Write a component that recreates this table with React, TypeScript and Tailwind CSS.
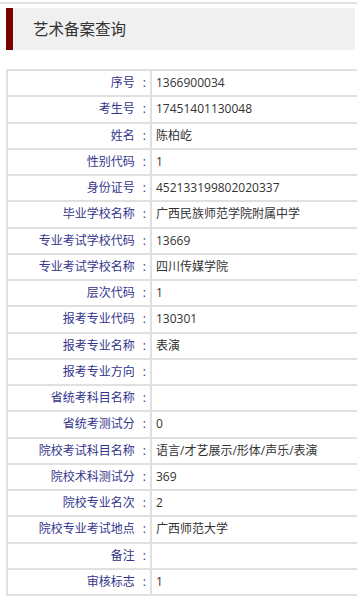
import React from "react";

const rows: [string, string][] = [
  ["序号", "1366900034"],
  ["考生号", "17451401130048"],
  ["姓名", "陈柏屹"],
  ["性别代码", "1"],
  ["身份证号", "452133199802020337"],
  ["毕业学校名称", "广西民族师范学院附属中学"],
  ["专业考试学校代码", "13669"],
  ["专业考试学校名称", "四川传媒学院"],
  ["层次代码", "1"],
  ["报考专业代码", "130301"],
  ["报考专业名称", "表演"],
  ["报考专业方向", ""],
  ["省统考科目名称", ""],
  ["省统考测试分", "0"],
  ["院校考试科目名称", "语言/才艺展示/形体/声乐/表演"],
  ["院校术科测试分", "369"],
  ["院校专业名次", "2"],
  ["院校专业考试地点", "广西师范大学"],
  ["备注", ""],
  ["审核标志", "1"],
];

export default function App() {
  return (
    <div
      className="w-[357px] h-[600px] overflow-hidden bg-white"
      style={{ fontFamily: '"Open Sans", "Noto Sans CJK SC", "Noto Sans", sans-serif' }}
    >
      <div className="pt-[2px]">
        <div className="h-[2px] bg-[#e2e2e2]" />
      </div>
      <div className="ml-[6px] mt-[4px] w-[349px] h-[42px] bg-[#f0f0f0] border-l-[7px] border-[#7b0000] flex items-center pl-[20px]">
        <span className="text-[15.5px] text-[#333] leading-none" style={{ fontFamily: '"Noto Sans CJK SC", sans-serif' }}>艺术备案查询</span>
      </div>
      <div className="ml-[6px] mt-[19px] w-[360px] h-[527px] border-t-2 border-l-2 border-[#e0e0e0] grid grid-rows-[repeat(20,1fr)]">
        {rows.map(([k, v]) => (
          <div key={k} className="flex border-b-2 border-[#e0e0e0] text-[12px] leading-none">
            <div className="w-[144px] shrink-0 flex items-center justify-end pr-[4px] text-[#33358c] border-r-2 border-[#e0e0e0]">
              <span>{k}</span>
              <span className="ml-[8px]">:</span>
            </div>
            <div className="flex items-center pl-[4px] text-[#333]">{v}</div>
          </div>
        ))}
      </div>
    </div>
  );
}
